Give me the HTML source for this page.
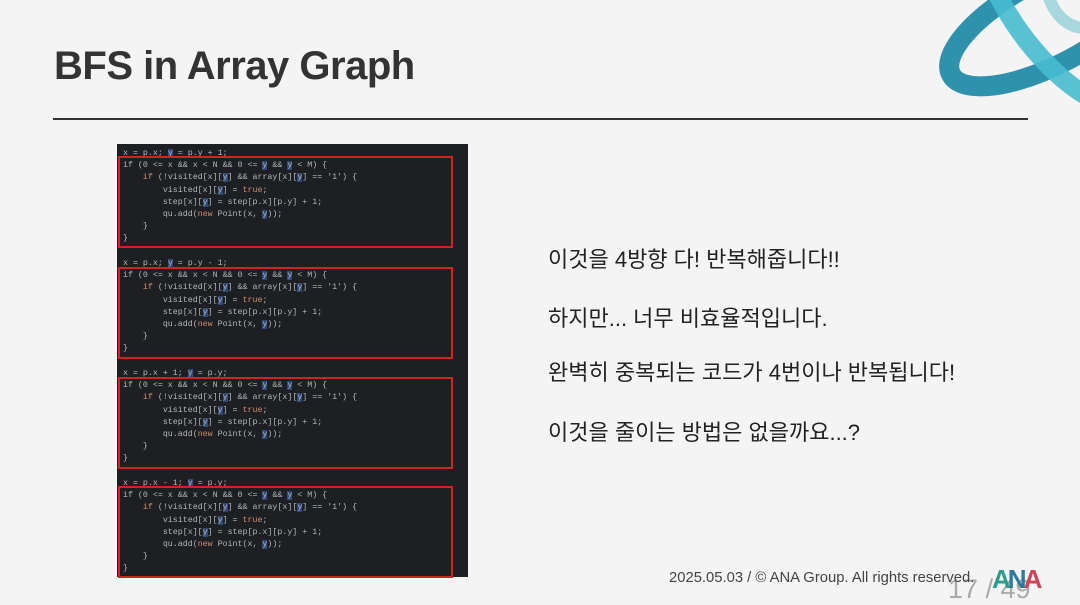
<!DOCTYPE html>
<html><head><meta charset="utf-8"><style>
body{margin:0;width:1080px;height:604px;background:#f4f4f4;position:relative;overflow:hidden;font-family:"Liberation Sans","Noto Sans CJK KR",sans-serif}
h1{position:absolute;left:54px;top:44px;margin:0;font-size:40px;font-weight:bold;color:#333;letter-spacing:-0.5px}
.rule{position:absolute;left:53px;top:118px;width:975px;height:1.5px;background:#333}
.code{position:absolute;left:117px;top:144px;width:351px;height:433px;background:#1e1f22}
.blk{position:absolute;left:0;font-family:"Liberation Mono",monospace;font-size:8.3px;color:#b4b6bc;line-height:12.2px;white-space:pre}
.box{position:absolute;left:1px;width:331px;height:88px;border:2.5px solid #d02420}
.k{color:#cf8e6d}.h{background:#2f4a7a}
.t{position:absolute;left:548px;font-size:22px;color:#222}
.foot{position:absolute;left:669px;top:570px;font-size:14.8px;color:#444}
.pg{position:absolute;left:948px;top:574px;font-size:27px;color:#aaa}
</style></head><body>
<svg style="position:absolute;left:900px;top:0" width="180" height="130" viewBox="0 0 180 130">
<ellipse cx="150" cy="22" rx="112" ry="42" transform="rotate(-28 150 22)" fill="none" stroke="#2f92ad" stroke-width="20"/>
<ellipse cx="160" cy="15" rx="42" ry="110" transform="rotate(-38 160 15)" fill="none" stroke="#47bccf" stroke-width="19" opacity=".9"/>
<ellipse cx="175" cy="-5" rx="25" ry="35" transform="rotate(-30 175 -5)" fill="none" stroke="#a8d8de" stroke-width="12"/>
</svg>
<h1>BFS in Array Graph</h1>
<div class="rule"></div>
<div class="code">
<div class="blk" style="top:4px;left:6px">x = p.x; <span class="h">y</span> = p.y + 1;
if (0 &lt;= x &amp;&amp; x &lt; N &amp;&amp; 0 &lt;= <span class="h">y</span> &amp;&amp; <span class="h">y</span> &lt; M) {
    <span class="k">if</span> (!visited[x][<span class="h">y</span>] &amp;&amp; array[x][<span class="h">y</span>] == '1') {
        visited[x][<span class="h">y</span>] = <span class="k">true</span>;
        step[x][<span class="h">y</span>] = step[p.x][p.y] + 1;
        qu.add(<span class="k">new</span> Point(x, <span class="h">y</span>));
    }
}</div>
<div class="blk" style="top:114px;left:6px">x = p.x; <span class="h">y</span> = p.y - 1;
if (0 &lt;= x &amp;&amp; x &lt; N &amp;&amp; 0 &lt;= <span class="h">y</span> &amp;&amp; <span class="h">y</span> &lt; M) {
    <span class="k">if</span> (!visited[x][<span class="h">y</span>] &amp;&amp; array[x][<span class="h">y</span>] == '1') {
        visited[x][<span class="h">y</span>] = <span class="k">true</span>;
        step[x][<span class="h">y</span>] = step[p.x][p.y] + 1;
        qu.add(<span class="k">new</span> Point(x, <span class="h">y</span>));
    }
}</div>
<div class="blk" style="top:224px;left:6px">x = p.x + 1; <span class="h">y</span> = p.y;
if (0 &lt;= x &amp;&amp; x &lt; N &amp;&amp; 0 &lt;= <span class="h">y</span> &amp;&amp; <span class="h">y</span> &lt; M) {
    <span class="k">if</span> (!visited[x][<span class="h">y</span>] &amp;&amp; array[x][<span class="h">y</span>] == '1') {
        visited[x][<span class="h">y</span>] = <span class="k">true</span>;
        step[x][<span class="h">y</span>] = step[p.x][p.y] + 1;
        qu.add(<span class="k">new</span> Point(x, <span class="h">y</span>));
    }
}</div>
<div class="blk" style="top:334px;left:6px">x = p.x - 1; <span class="h">y</span> = p.y;
if (0 &lt;= x &amp;&amp; x &lt; N &amp;&amp; 0 &lt;= <span class="h">y</span> &amp;&amp; <span class="h">y</span> &lt; M) {
    <span class="k">if</span> (!visited[x][<span class="h">y</span>] &amp;&amp; array[x][<span class="h">y</span>] == '1') {
        visited[x][<span class="h">y</span>] = <span class="k">true</span>;
        step[x][<span class="h">y</span>] = step[p.x][p.y] + 1;
        qu.add(<span class="k">new</span> Point(x, <span class="h">y</span>));
    }
}</div>
<div class="box" style="top:12px"></div>
<div class="box" style="top:123px"></div>
<div class="box" style="top:233px"></div>
<div class="box" style="top:342px"></div>
</div>
<div class="t" style="top:242px">이것을 4방향 다! 반복해줍니다!!</div>
<div class="t" style="top:301px">하지만... 너무 비효율적입니다.</div>
<div class="t" style="top:355px">완벽히 중복되는 코드가 4번이나 반복됩니다!</div>
<div class="t" style="top:415px">이것을 줄이는 방법은 없을까요...?</div>
<div class="pg">17 / 49</div>
<div class="foot">2025.05.03 / © ANA Group. All rights reserved.</div>
<div style="position:absolute;left:992px;top:564px;font-size:26px;font-weight:bold;letter-spacing:-3px"><span style="color:#2a9d8f">A</span><span style="color:#2a7a9d">N</span><span style="color:#d04455">A</span></div>
</body></html>
